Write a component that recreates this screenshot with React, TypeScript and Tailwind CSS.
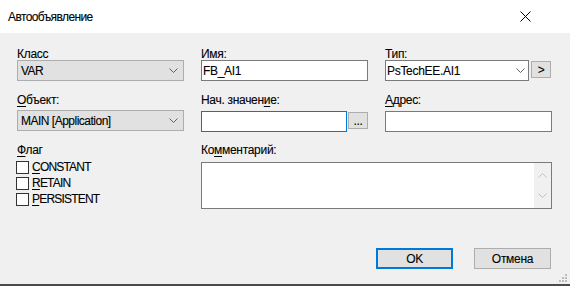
import React from "react";

const ChevronDown = ({ color = "#606060" }: { color?: string }) => (
  <svg width="9" height="5" viewBox="0 0 9 5" className="block">
    <path d="M0.5 0.5 L4.5 4.5 L8.5 0.5" fill="none" stroke={color} strokeWidth="1" />
  </svg>
);

const ChevronUp = ({ color = "#c0c0c0" }: { color?: string }) => (
  <svg width="9" height="5" viewBox="0 0 9 5" className="block">
    <path d="M0.5 4.5 L4.5 0.5 L8.5 4.5" fill="none" stroke={color} strokeWidth="1" />
  </svg>
);

const Label = ({ pre, u, post }: { pre?: string; u: string; post?: string }) => (
  <div className="h-[12px] leading-[12px] whitespace-nowrap">
    {pre}
    <span className="underline underline-offset-[2px]">{u}</span>
    {post}
  </div>
);

const Combo = ({ text, narrow }: { text: string; narrow?: boolean }) => (
  <div className="h-[21px] w-[167px] bg-[#e1e1e1] border border-[#adadad] flex items-center justify-between pl-[3px] pr-[5px]">
    <span className={narrow ? "leading-[14px] tracking-[-0.6px]" : "leading-[14px] tracking-[-0.5px]"}>{text}</span>
    <ChevronDown />
  </div>
);

const CheckRow = ({ u, rest }: { u: string; rest: string }) => (
  <div className="flex items-center h-[16px]">
    <div className="w-[13px] h-[13px] border border-[#333333] bg-white shrink-0" />
    <span className="ml-[3px] leading-[14px] tracking-[-0.8px]">
      <span className="underline underline-offset-[2px]">{u}</span>
      {rest}
    </span>
  </div>
);

export default function App() {
  return (
    <div className="w-[570px] h-[286px] bg-[#f0f0f0] flex flex-col font-['Liberation_Sans',Arial,sans-serif] text-[12px] text-[#000000] tracking-[-0.3px] [-webkit-text-stroke:0.1px_#000000] relative overflow-hidden">
      {/* Title bar */}
      <div className="h-[33px] bg-white flex items-center justify-between pl-[8px] pr-[39px] shrink-0">
        <span className="leading-[14px] tracking-[-0.6px]">Автообъявление</span>
        <svg width="11" height="11" viewBox="0 0 11 11" className="block">
          <path d="M0.5 0.5 L10.5 10.5 M10.5 0.5 L0.5 10.5" stroke="#000" strokeWidth="1" />
        </svg>
      </div>

      <div className="pl-[17px] pt-[15px] flex flex-col">
        {/* Row 1 */}
        <div className="flex gap-[17px]">
          <div className="w-[167px] flex flex-col">
            <Label pre="К" u="л" post="асс" />
            <Combo text="VAR" narrow />
          </div>
          <div className="w-[167px] flex flex-col">
            <Label u="И" post="мя:" />
            <div className="h-[21px] bg-white border border-[#7a7a7a] flex items-center pl-[1px]">
              <span className="leading-[14px]">FB_AI1</span>
            </div>
          </div>
          <div className="w-[167px] flex flex-col">
            <Label u="Т" post="ип:" />
            <div className="flex gap-[2px]">
              <div className="w-[144px] h-[21px] bg-white border border-[#7a7a7a] flex items-center justify-between pl-[1px] pr-[3px]">
                <span className="leading-[14px]">PsTechEE.AI1</span>
                <ChevronDown />
              </div>
              <div className="mt-[1px] w-[20px] h-[17px] bg-[#e1e1e1] border border-[#adadad] flex items-center justify-center leading-[12px]">
                &gt;
              </div>
            </div>
          </div>
        </div>

        {/* Row 2 */}
        <div className="flex gap-[17px] mt-[13px]">
          <div className="w-[167px] flex flex-col">
            <Label u="О" post="бъект:" />
            <div className="mt-[4px]">
              <Combo text="MAIN [Application]" />
            </div>
          </div>
          <div className="w-[167px] flex flex-col">
            <Label pre="Нач. значен" u="и" post="е:" />
            <div className="flex gap-[1px] mt-[5px]">
              <div className="w-[146px] h-[21px] bg-white border border-[#0078d7]" />
              <div className="mt-[1px] w-[20px] h-[17px] bg-[#e1e1e1] border border-[#adadad] flex items-center justify-center leading-[12px]">
                ...
              </div>
            </div>
          </div>
          <div className="w-[167px] flex flex-col">
            <Label u="А" post="дрес:" />
            <div className="mt-[5px] h-[21px] bg-white border border-[#7a7a7a]" />
          </div>
        </div>

        {/* Row 3 */}
        <div className="flex gap-[17px] mt-[12px]">
          <div className="w-[167px] flex flex-col">
            <Label u="Ф" post="лаг" />
            <div className="mt-[3px] -ml-[1px] flex flex-col">
              <CheckRow u="C" rest="ONSTANT" />
              <CheckRow u="R" rest="ETAIN" />
              <CheckRow u="P" rest="ERSISTENT" />
            </div>
          </div>
          <div className="w-[351px] flex flex-col">
            <Label pre="Ко" u="м" post="ментарий:" />
            <div className="mt-[6px] h-[47px] bg-white border border-[#7a7a7a] flex justify-end">
              <div className="w-[17px] h-full bg-[#f0f0f0] flex flex-col items-center justify-between py-[10px]">
                <ChevronUp />
                <ChevronDown color="#c0c0c0" />
              </div>
            </div>
          </div>
        </div>

        {/* Buttons */}
        <div className="flex justify-end gap-[21px] pr-[19px] mt-[39px]">
          <div className="w-[77px] h-[21px] bg-[#e1e1e1] border-2 border-[#0078d7] flex items-center justify-center leading-[14px]">
            OK
          </div>
          <div className="w-[77px] h-[21px] bg-[#e1e1e1] border border-[#adadad] flex items-center justify-center leading-[14px]">
            Отмена
          </div>
        </div>
      </div>

      {/* size grip */}
      <svg width="10" height="10" viewBox="0 0 10 10" className="absolute right-[2px] bottom-[3px]">
        <rect x="7" y="1" width="2" height="2" fill="#bcbcbc" />
        <rect x="4" y="4" width="2" height="2" fill="#bcbcbc" />
        <rect x="7" y="4" width="2" height="2" fill="#bcbcbc" />
        <rect x="1" y="7" width="2" height="2" fill="#bcbcbc" />
        <rect x="4" y="7" width="2" height="2" fill="#bcbcbc" />
        <rect x="7" y="7" width="2" height="2" fill="#bcbcbc" />
      </svg>
      <div className="absolute left-0 right-0 bottom-0 h-[2px] bg-[#4a4a4a]" />
    </div>
  );
}
